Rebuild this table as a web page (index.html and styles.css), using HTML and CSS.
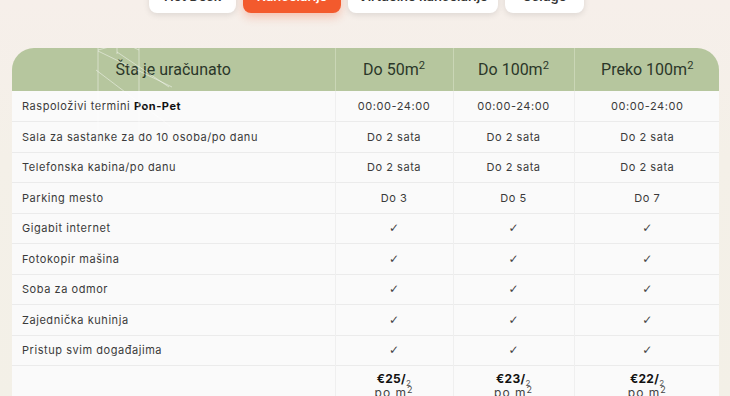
FILE: index.html
```html
<!DOCTYPE html>
<html lang="sr">
<head>
<meta charset="utf-8">
<title>Cenovnik</title>
<link rel="stylesheet" href="styles.css">
</head>
<body>
<div class="page">
  <nav class="tabs">
    <div class="tab tab-hot">Hot Desk</div>
    <div class="tab tab-active tab-kanc">Kancelarije</div>
    <div class="tab tab-virt">Virtuelne kancelarije</div>
    <div class="tab tab-usl">Usluge</div>
  </nav>

  <div class="table-wrap">
    <svg class="deco" width="120" height="100" viewBox="0 0 120 100">
      <g fill="none" stroke="rgba(255,255,255,0.45)" stroke-width="1">
        <line x1="26" y1="8" x2="26" y2="100"/>
        <line x1="67" y1="0" x2="67" y2="100"/>
        <line x1="26" y1="10" x2="52" y2="3"/>
        <line x1="26" y1="11" x2="100" y2="47"/>
        <line x1="45" y1="12" x2="97" y2="47"/>
        <line x1="45" y1="8" x2="45" y2="14"/>
        <line x1="24" y1="30" x2="98" y2="86"/>
        <line x1="52" y1="3" x2="67" y2="10"/>
      </g>
    </svg>
    <table class="price-table">
      <thead>
        <tr>
          <th class="c-feat">Šta je uračunato</th>
          <th class="c-a">Do 50m<sup>2</sup></th>
          <th class="c-b">Do 100m<sup>2</sup></th>
          <th class="c-c">Preko 100m<sup>2</sup></th>
        </tr>
      </thead>
      <tbody>
        <tr><td>Raspoloživi termini <b>Pon-Pet</b></td><td>00:00-24:00</td><td>00:00-24:00</td><td>00:00-24:00</td></tr>
        <tr><td>Sala za sastanke za do 10 osoba/po danu</td><td>Do 2 sata</td><td>Do 2 sata</td><td>Do 2 sata</td></tr>
        <tr><td>Telefonska kabina/po danu</td><td>Do 2 sata</td><td>Do 2 sata</td><td>Do 2 sata</td></tr>
        <tr><td>Parking mesto</td><td>Do 3</td><td>Do 5</td><td>Do 7</td></tr>
        <tr><td>Gigabit internet</td><td class="chk">✓</td><td class="chk">✓</td><td class="chk">✓</td></tr>
        <tr><td>Fotokopir mašina</td><td class="chk">✓</td><td class="chk">✓</td><td class="chk">✓</td></tr>
        <tr><td>Soba za odmor</td><td class="chk">✓</td><td class="chk">✓</td><td class="chk">✓</td></tr>
        <tr><td>Zajednička kuhinja</td><td class="chk">✓</td><td class="chk">✓</td><td class="chk">✓</td></tr>
        <tr><td>Pristup svim događajima</td><td class="chk">✓</td><td class="chk">✓</td><td class="chk">✓</td></tr>
        <tr class="price-row">
          <td></td>
          <td><span class="amt">€25/</span><span class="sub">2</span><br><span class="per">po m<sup>2</sup></span></td>
          <td><span class="amt">€23/</span><span class="sub">2</span><br><span class="per">po m<sup>2</sup></span></td>
          <td><span class="amt">€22/</span><span class="sub">2</span><br><span class="per">po m<sup>2</sup></span></td>
        </tr>
      </tbody>
    </table>
  </div>
</div>
</body>
</html>
```

FILE: styles.css
```css
* { box-sizing: border-box; }

html, body {
  margin: 0;
  padding: 0;
}

body {
  background: #f4f0e8;
  font-family: Inter, "Noto Sans", sans-serif;
  color: #333;
  overflow: hidden;
}

.page {
  display: flow-root;
  background: linear-gradient(180deg, #f6efea 0px, #f4f0e8 160px, #f3f0e7 100%);
  min-height: 396px;
}

.tabs {
  display: flex;
  justify-content: flex-start;
  gap: 7px;
  padding-left: 149px;
  margin-top: -26px;
}

.tab {
  height: 39px;
  border-radius: 8px;
  background: #ffffff;
  box-shadow: 0 2px 6px rgba(0, 0, 0, 0.10);
  font-size: 13px;
  font-weight: 600;
  color: #333;
  display: flex;
  align-items: flex-end;
  justify-content: center;
  padding-bottom: 9px;
  line-height: 16px;
}

.tab-hot { width: 87px; }
.tab-kanc { width: 98px; }
.tab-virt { width: 150px; }
.tab-usl { width: 79px; }

.tab-active {
  background: #f35a2d;
  color: #fff;
  box-shadow: 0 4px 10px rgba(243, 90, 45, 0.30);
}

.table-wrap {
  position: relative;
  margin: 35px 11px 0 12px;
  border-radius: 22px 22px 0 0;
  overflow: hidden;
}

.deco {
  position: absolute;
  left: 60px;
  top: -8px;
  pointer-events: none;
  z-index: 2;
}

.price-table {
  width: 100%;
  border-collapse: collapse;
  table-layout: fixed;
}

.price-table th {
  background: #b6c69e;
  height: 43px;
  font-family: Roboto, "Noto Sans", sans-serif;
  font-weight: 400;
  font-size: 16px;
  color: #2b3729;
  text-align: center;
  border-left: 1px solid #cad6b6;
  padding: 0;
}

.price-table th:first-child { border-left: none; }

.price-table sup {
  font-size: 0.7em;
  vertical-align: 0.55em;
  line-height: 0;
}

.c-feat { width: 323px; }
.c-a { width: 118px; }
.c-b { width: 121px; }
.c-c { width: 146px; }

.price-table td {
  background: #fafafa;
  height: 30.5px;
  font-size: 11px;
  letter-spacing: 0.55px;
  color: #3a3a3a;
  text-align: center;
  border-top: 1px solid #ebebeb;
  border-left: 1px solid #efefef;
  padding: 0;
}

.price-table tbody tr:first-child td { border-top: none; }

.price-table td:first-child {
  text-align: left;
  padding-left: 10px;
  border-left: none;
}

.price-table td b {
  font-weight: 700;
  color: #111;
}

.price-table td.chk {
  font-family: "DejaVu Sans", sans-serif;
  font-size: 12px;
  letter-spacing: 0;
  color: #444;
}

.price-row td {
  height: 40px;
  vertical-align: top;
  padding-top: 8px;
  line-height: 10px;
}

.amt {
  font-weight: 700;
  font-size: 12px;
  color: #111;
  letter-spacing: 0.3px;
}

.sub {
  font-size: 8px;
  vertical-align: -3px;
  color: #555;
}

.per {
  font-size: 12px;
  font-weight: 400;
  color: #444;
  letter-spacing: 1px;
}

.per sup {
  font-size: 9px;
  vertical-align: 4px;
}
```
